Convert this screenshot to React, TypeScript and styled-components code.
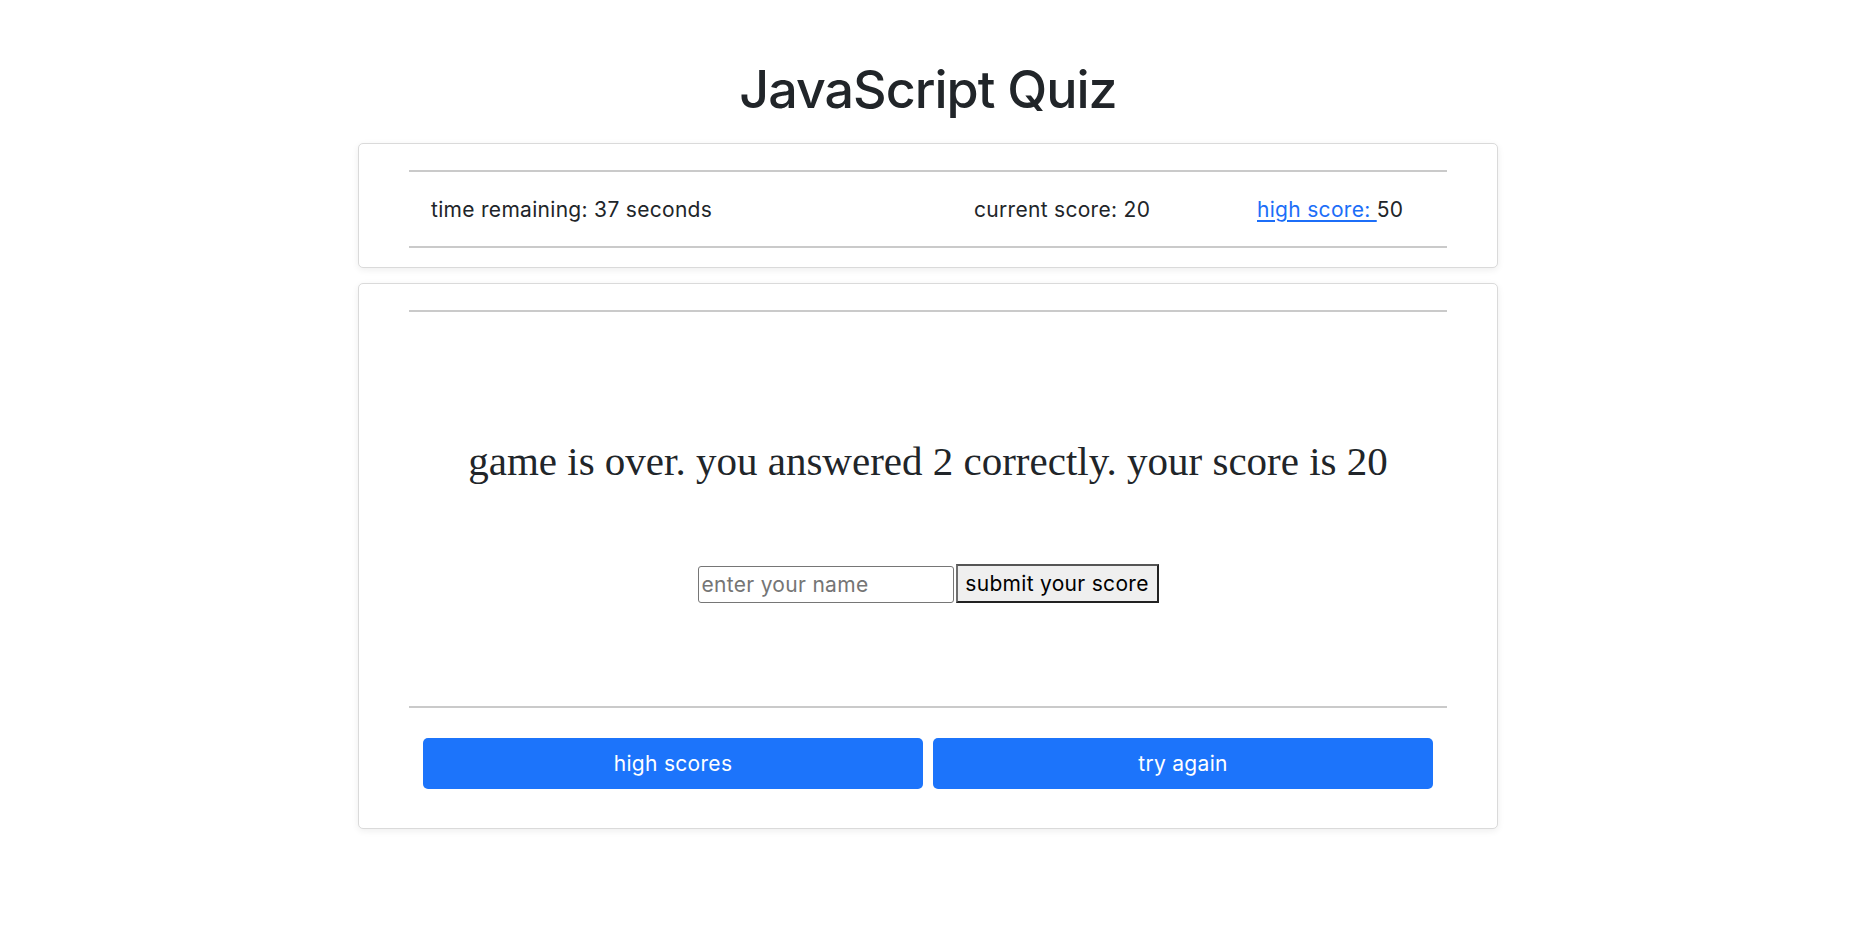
import React from "react";
import styled, { createGlobalStyle } from "styled-components";

const GlobalStyle = createGlobalStyle`
  html, body {
    margin: 0;
    padding: 0;
    background: #ffffff;
  }
  body {
    font-family: Inter, "Liberation Sans", Arial, sans-serif;
    color: #212529;
  }
  * { box-sizing: border-box; }
`;

const Page = styled.main`
  padding-top: 59px;
  padding-bottom: 60px;
`;

const Title = styled.h1`
  margin: 0 0 22px;
  text-align: center;
  font-size: 52px;
  line-height: 1.2;
  font-weight: 500;
  letter-spacing: -1px;
  color: #212529;
`;

const Container = styled.div`
  width: 1140px;
  margin: 0 auto;
  display: flex;
  flex-direction: column;
  gap: 15px;
`;

const Card = styled.section<{ $bottom: number }>`
  background: #fff;
  border: 1px solid #dadada;
  border-radius: 5px;
  box-shadow: 0 2px 7px rgba(0, 0, 0, 0.07);
  padding: 26px 50px ${(p) => p.$bottom}px;
`;

const Rule = styled.hr`
  margin: 0;
  height: 0;
  border: 0;
  border-top: 2px solid #cacaca;
`;

const StatsRow = styled.div`
  height: 74px;
  display: grid;
  grid-template-columns: 543px 283px 1fr;
  align-items: center;
  padding-left: 22px;
  font-size: 21px;
  letter-spacing: 0.3px;
`;

const Stat = styled.span`
  white-space: nowrap;
`;

const StatLink = styled.a`
  color: #1c6ef8;
  text-decoration: underline;
  text-underline-offset: 3px;
  cursor: pointer;
`;

const Body = styled.div`
  height: 394px;
  display: flex;
  flex-direction: column;
  align-items: center;
  padding-top: 125px;
`;

const Message = styled.h3`
  margin: 0;
  font-family: "Liberation Serif", "DejaVu Serif", serif;
  font-weight: 400;
  font-size: 41px;
  line-height: 48px;
  color: #212529;
`;

const Form = styled.form`
  margin-top: 79px;
  display: flex;
  align-items: flex-end;
`;

const NameInput = styled.input`
  width: 256px;
  height: 37px;
  padding: 0 3px;
  border: 1px solid #767676;
  border-radius: 3px;
  font-family: Inter, "Liberation Sans", sans-serif;
  font-size: 21px;
  letter-spacing: 0.3px;
  color: #212529;
  &::placeholder {
    color: #757575;
  }
`;

const SubmitButton = styled.button`
  margin-left: 2px;
  width: 203px;
  height: 39px;
  padding: 0;
  background: #efefef;
  border: 2px solid #222;
  border-left-color: #6f6f6f;
  border-top-color: #555;
  font-family: Inter, "Liberation Sans", sans-serif;
  font-size: 21px;
  letter-spacing: 0.3px;
  color: #000;
`;

const ButtonRow = styled.div`
  margin-top: 30px;
  padding: 0 14px;
  display: flex;
  gap: 10px;
`;

const PrimaryButton = styled.button`
  flex: 1;
  height: 51px;
  border: 0;
  border-radius: 5px;
  background: #1c74fb;
  color: #fff;
  font-family: Inter, "Liberation Sans", sans-serif;
  font-size: 21px;
  letter-spacing: 0.3px;
  cursor: pointer;
`;

export default function App() {
  return (
    <>
      <GlobalStyle />
      <Page>
        <Title>JavaScript Quiz</Title>
        <Container>
          <Card $bottom={19}>
            <Rule />
            <StatsRow>
              <Stat>time remaining: 37 seconds</Stat>
              <Stat>current score: 20</Stat>
              <Stat>
                <StatLink>high score: </StatLink>50
              </Stat>
            </StatsRow>
            <Rule />
          </Card>
          <Card $bottom={39}>
            <Rule />
            <Body>
              <Message>game is over. you answered 2 correctly. your score is 20</Message>
              <Form onSubmit={(e) => e.preventDefault()}>
                <NameInput placeholder="enter your name" />
                <SubmitButton type="submit">submit your score</SubmitButton>
              </Form>
            </Body>
            <Rule />
            <ButtonRow>
              <PrimaryButton>high scores</PrimaryButton>
              <PrimaryButton>try again</PrimaryButton>
            </ButtonRow>
          </Card>
        </Container>
      </Page>
    </>
  );
}
